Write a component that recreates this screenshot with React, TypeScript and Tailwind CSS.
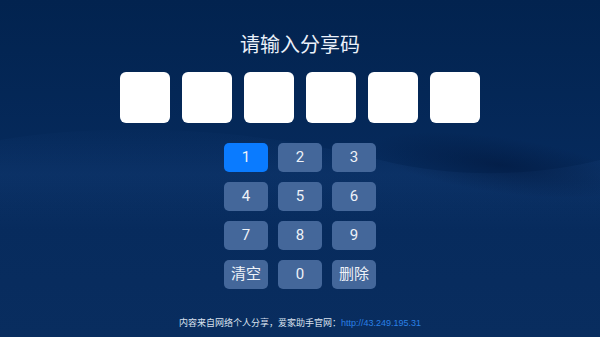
import React from 'react';

const keys = ['1', '2', '3', '4', '5', '6', '7', '8', '9', '清空', '0', '删除'];

const App: React.FC = () => {
  return (
    <div
      className="relative w-[600px] h-[337px] overflow-hidden bg-gradient-to-b from-[#02234f] via-[#062a5c] to-[#092d5f]"
      style={{ fontFamily: 'Roboto, "Noto Sans CJK SC", sans-serif' }}
    >
      {/* background waves */}
      <svg className="absolute inset-0 pointer-events-none" width="600" height="337" viewBox="0 0 600 337">
        <defs>
          <linearGradient id="w1" gradientUnits="userSpaceOnUse" x1="0" y1="120" x2="0" y2="230">
            <stop offset="0" stopColor="#1d4a88" stopOpacity="0" />
            <stop offset="0.5" stopColor="#1d4a88" stopOpacity="0.22" />
            <stop offset="1" stopColor="#1d4a88" stopOpacity="0" />
          </linearGradient>
          <radialGradient id="w2" cx="0.5" cy="0.5" r="0.5">
            <stop offset="0" stopColor="#01163a" stopOpacity="0.55" />
            <stop offset="1" stopColor="#01163a" stopOpacity="0" />
          </radialGradient>
        </defs>
        <path d="M0 140 C120 120 260 130 380 160 C460 180 540 175 600 160 L600 337 L0 337 Z" fill="url(#w1)" />
        <ellipse cx="500" cy="165" rx="130" ry="28" transform="rotate(8 500 165)" fill="url(#w2)" />
      </svg>

      <div className="relative flex flex-col items-center">
        <h1 className="mt-[33px] text-[20px] leading-[24px] font-normal text-[#eaf0f9]">请输入分享码</h1>

        <div className="mt-[15px] flex gap-[12px]">
          {Array.from({ length: 6 }).map((_, i) => (
            <div key={i} className="w-[50px] h-[51px] rounded-[6px] bg-white" />
          ))}
        </div>

        <div className="mt-[20px] grid grid-cols-3 gap-x-[10px] gap-y-[10px]">
          {keys.map((k, i) => (
            <div
              key={k}
              className={`w-[44px] h-[29px] rounded-[5px] flex items-center justify-center text-[15px] text-[#eef2f8] ${
                i === 0 ? 'bg-[#0a7bff]' : 'bg-[#44679a]'
              }`}
            >
              {k}
            </div>
          ))}
        </div>

        <div
          className="mt-[28px] text-[9px] leading-[12px] text-[#d9e1ee]"
          style={{ fontFamily: '"Liberation Sans", "Noto Sans CJK SC", sans-serif' }}
        >
          内容来自网络个人分享，爱家助手官网：<span className="text-[#2a80e6]">http://43.249.195.31</span>
        </div>
      </div>
    </div>
  );
};

export default App;
